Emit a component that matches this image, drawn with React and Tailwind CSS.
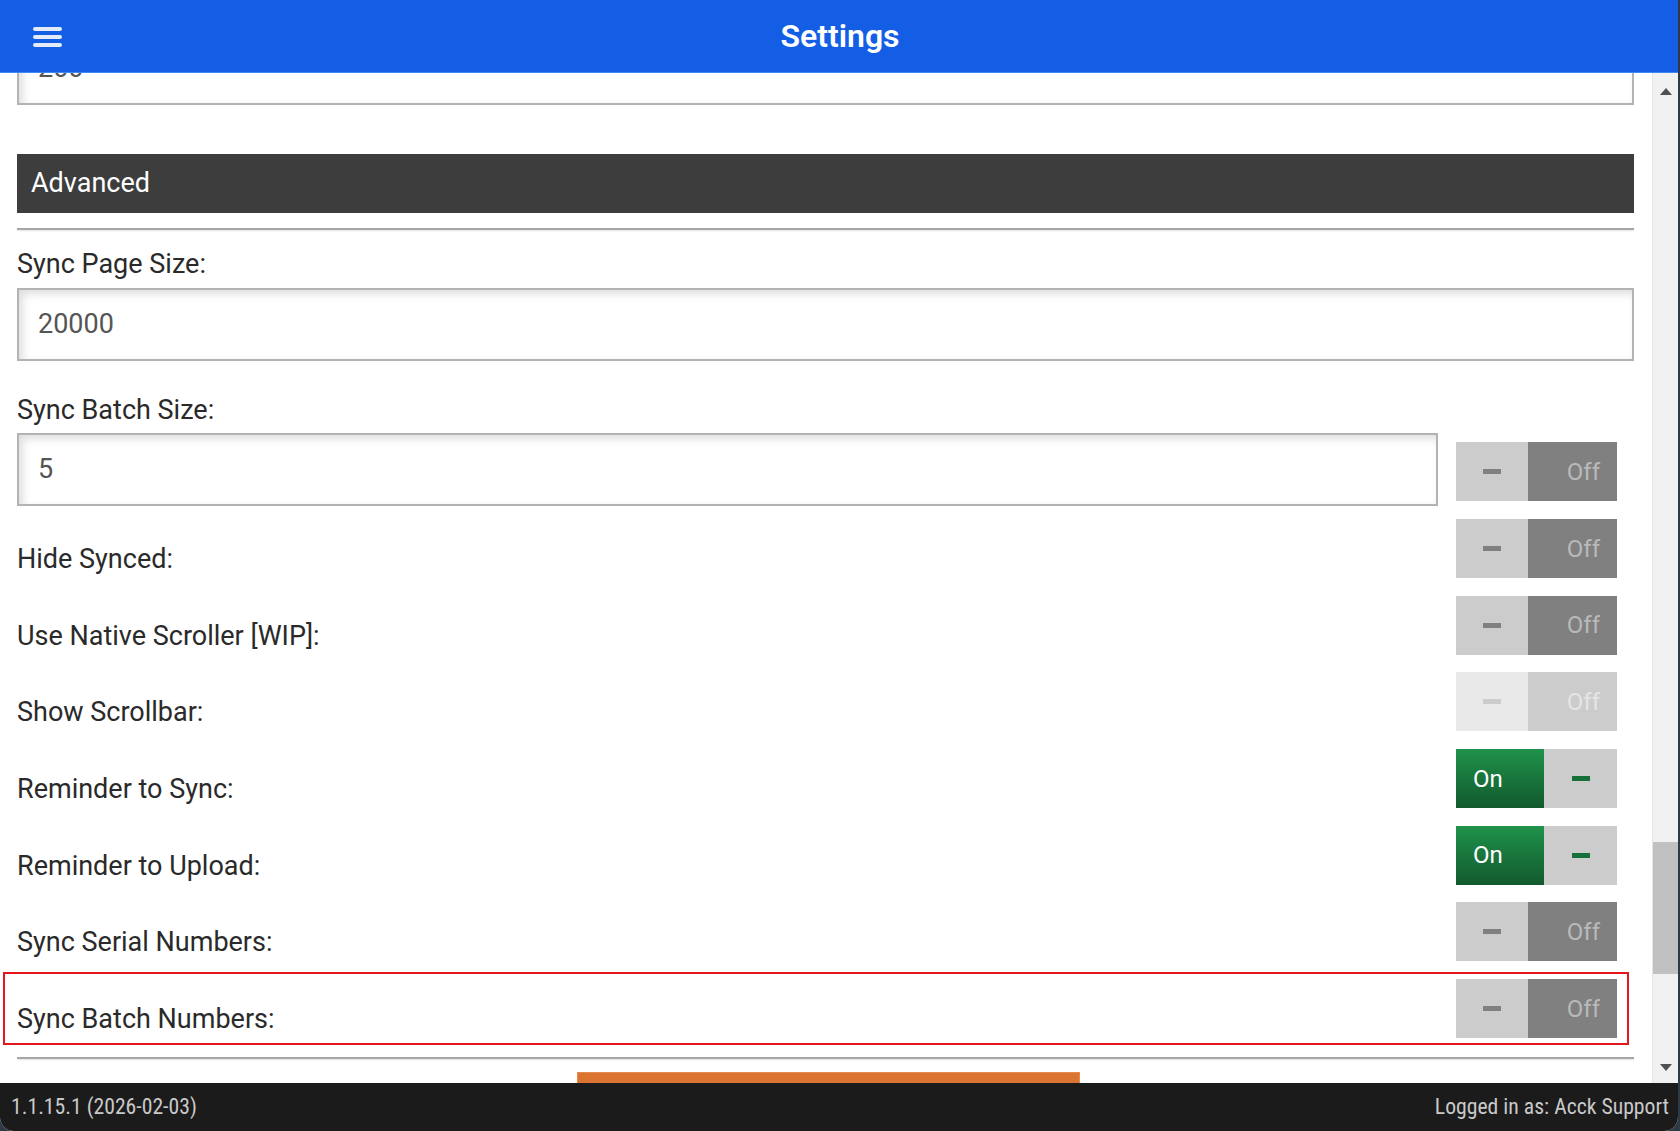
import React from "react";

const font = { fontFamily: "Roboto, 'Noto Sans', sans-serif" };

const Toggle = ({ on = false, disabled = false }) => {
  if (on) {
    return (
      <div className="flex h-[59px] w-[161px] shrink-0">
        <div className="flex w-[88px] items-center bg-gradient-to-b from-[#1f924b] to-[#125a2d] pl-[17px] text-[24px] text-white">
          On
        </div>
        <div className="flex w-[73px] items-center justify-center bg-[#cccccc]">
          <span className="h-[5px] w-[18px] bg-[#17703a]" />
        </div>
      </div>
    );
  }
  return (
    <div className="flex h-[59px] w-[161px] shrink-0">
      <div
        className={`flex w-[72px] items-center justify-center ${
          disabled ? "bg-[#e9e9e9]" : "bg-[#cccccc]"
        }`}
      >
        <span
          className={`h-[5px] w-[18px] ${
            disabled ? "bg-[#cccccc]" : "bg-[#808080]"
          }`}
        />
      </div>
      <div
        className={`flex w-[89px] items-center justify-end pr-[17px] text-[24px] ${
          disabled ? "bg-[#cccccc] text-[#e4e4e4]" : "bg-[#808080] text-[#b9b9b9]"
        }`}
      >
        Off
      </div>
    </div>
  );
};

const TextInput = ({ value, className = "" }) => (
  <div
    className={`flex h-[73px] items-center border-2 border-[#b3b3b3] bg-white pl-[19px] text-[27px] text-[#555555] shadow-[inset_4px_4px_9px_rgba(0,0,0,0.13)] ${className}`}
  >
    {value}
  </div>
);

const Label = ({ children }) => (
  <div className="text-[27px] leading-[36px] text-[#2a2a2a]">{children}</div>
);

const Divider = () => (
  <div className="h-[2px] bg-[#a6a6a6] shadow-[0_1px_2px_rgba(0,0,0,0.12)]" />
);

const rows = [
  { label: "Hide Synced:" },
  { label: "Use Native Scroller [WIP]:" },
  { label: "Show Scrollbar:", disabled: true },
  { label: "Reminder to Sync:", on: true },
  { label: "Reminder to Upload:", on: true },
  { label: "Sync Serial Numbers:" },
  { label: "Sync Batch Numbers:", highlight: true },
];

export default function App() {
  return (
    <div className="h-[1131px] w-[1680px] overflow-hidden bg-[#2e3b44]" style={font}>
      <div className="flex h-full w-[1678px] flex-col overflow-hidden rounded-b-[14px] bg-white">
        {/* Header */}
        <header className="relative flex h-[73px] shrink-0 items-center justify-center border-b border-[#3f87f2] bg-[#145de5]">
          <button className="absolute left-[33px] top-[27px] flex w-[29px] flex-col gap-[4px]">
            <span className="h-[4px] rounded-full bg-[#e3ebfb]" />
            <span className="h-[4px] rounded-full bg-[#e3ebfb]" />
            <span className="h-[4px] rounded-full bg-[#e3ebfb]" />
          </button>
          <h1 className="ml-[2px] text-[32px] font-semibold text-white">Settings</h1>
        </header>

        {/* Body */}
        <div className="flex h-[1010px] shrink-0">
          <main className="flex-1 overflow-hidden pl-[17px] pr-[18px]">
            <div className="-mt-[41px] flex flex-col">
              <TextInput value="200" />

              <div className="mt-[49px] flex h-[59px] items-center bg-[#3d3d3d] pl-[14px] text-[27px] text-white">
                Advanced
              </div>

              <div className="mt-[15px]">
                <Divider />
              </div>

              <div className="mt-[16px]">
                <Label>Sync Page Size:</Label>
              </div>
              <TextInput value="20000" className="mt-[6px]" />

              <div className="mt-[31px]">
                <Label>Sync Batch Size:</Label>
              </div>
              <div className="mt-[5px] flex items-start gap-[18px]">
                <TextInput value="5" className="flex-1" />
                <div className="mr-[17px] mt-[9px]">
                  <Toggle />
                </div>
              </div>

              <div className="mt-[13px] flex flex-col gap-[17.7px]">
                {rows.map((r) => (
                  <div key={r.label} className="relative flex items-end justify-between pr-[17px]">
                    <div className="mb-[1px]">
                      <Label>{r.label}</Label>
                    </div>
                    <Toggle on={r.on} disabled={r.disabled} />
                    {r.highlight && (
                      <div className="pointer-events-none absolute -bottom-[7px] -left-[14px] -top-[7px] right-[5px] border-2 border-[#e3161b]" />
                    )}
                  </div>
                ))}
              </div>

              <div className="mt-[19px]">
                <Divider />
              </div>

              <div className="mt-[13px] flex justify-center pl-[6px]">
                <button className="h-[60px] w-[503px] border border-[#e58a4e] bg-[#db7331]" />
              </div>
            </div>
          </main>

          {/* Scrollbar */}
          <div className="flex w-[26px] shrink-0 flex-col items-center border-l border-[#e6e6e6] bg-[#f1f1f1]">
            <div className="flex h-[36px] items-center">
              <svg width="12" height="7" viewBox="0 0 12 7">
                <path d="M6 0 L12 7 L0 7 Z" fill="#505050" />
              </svg>
            </div>
            <div className="mt-[733px] h-[132px] w-full bg-[#c1c1c1]" />
            <div className="flex flex-1 items-end pb-[12px]">
              <svg width="12" height="7" viewBox="0 0 12 7">
                <path d="M0 0 L12 0 L6 7 Z" fill="#505050" />
              </svg>
            </div>
          </div>
        </div>

        {/* Footer */}
        <footer
          className="flex h-[48px] shrink-0 items-center justify-between bg-[#1b1b1b] pl-[11px] pr-[9px] text-[21.7px] text-[#c9c9c9]"
          style={{ fontFamily: "'Roboto Condensed', Roboto, sans-serif" }}
        >
          <span>1.1.15.1 (2026-02-03)</span>
          <span>Logged in as: Acck Support</span>
        </footer>
      </div>
    </div>
  );
}
